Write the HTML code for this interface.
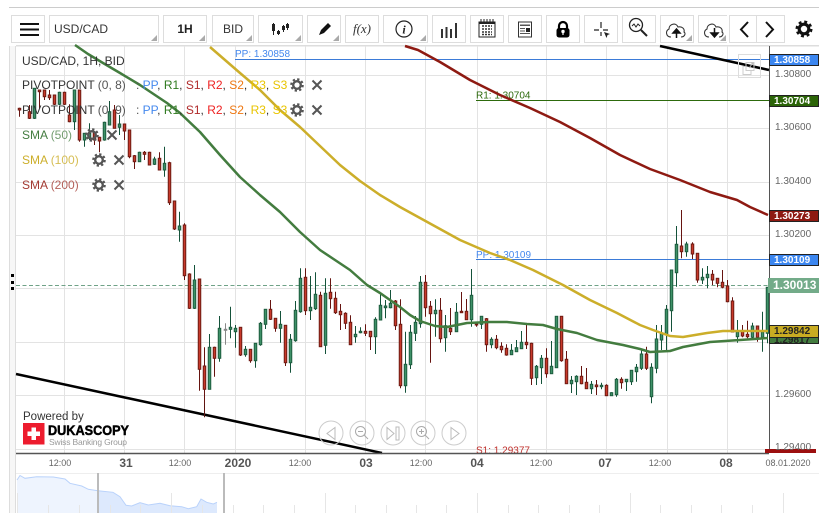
<!DOCTYPE html>
<html><head><meta charset="utf-8"><style>
html,body{margin:0;padding:0;background:#fff}
body{width:826px;height:523px;overflow:hidden;position:relative;font-family:"Liberation Sans",sans-serif}
.b{position:absolute;top:15px;height:26px;border:1px solid #ddd;background:#fff;box-sizing:content-box;font-size:12px;color:#222;line-height:26px;text-align:center}
.b i{position:absolute;right:1px;bottom:1px;width:0;height:0;border-left:6px solid transparent;border-bottom:6px solid #aaa}
.b svg,.a svg{position:absolute;left:0;top:0}
.l{position:absolute;left:769px;width:50px;height:12px;line-height:11px;font-size:10px;color:#fff;box-sizing:border-box;border:1px solid #222;padding-left:4px;font-weight:bold}
.t{position:absolute;font-size:9px;color:#666;white-space:nowrap;line-height:12px;transform:translateX(-50%);top:457px}
.m{font-size:12px;font-weight:bold;color:#555;top:455px;line-height:16px}
.y{position:absolute;left:775px;font-size:10px;color:#666;line-height:12px}
.g{position:absolute;left:22px;font-size:12px;line-height:14px;white-space:nowrap;color:#333}
.g b{font-weight:normal;color:#555;margin-left:3.5px}
</style></head><body>
<div style="position:absolute;left:9px;top:7px;width:810px;height:1px;background:#ccc"></div>
<div style="position:absolute;left:9px;top:46px;width:7px;height:467px;background:#f7f7f7;border-left:1px solid #ddd;box-sizing:border-box;border-right:1px solid #ddd"></div>
<div style="position:absolute;left:11px;top:274px;width:3px;height:3px;background:#000"></div>
<div style="position:absolute;left:11px;top:281px;width:3px;height:3px;background:#000"></div>
<div style="position:absolute;left:11px;top:287px;width:3px;height:3px;background:#000"></div>

<div class="b" style="left:11px;width:32px"><svg width="32" height="26"><path d="M8 8H27M8 13.500H27M8 19H27" stroke="#111" stroke-width="2"/></svg></div>
<div class="b" style="left:49px;text-align:left;padding-left:4px;width:104px;color:#333">USD/CAD<i></i></div>
<div class="b" style="left:163px;width:42px;font-weight:bold">1H<i></i></div>
<div class="b" style="left:212px;width:40px;color:#333">BID<i></i></div>
<div class="b" style="left:258px;width:43px"><svg width="43" height="26"><path d="M14.500 7v12M19.500 14v5M24.500 9v7M28.500 7v7" stroke="#222" stroke-width="1"/><path d="M13 8h3v7h-3zM18 15h3v3h-3zM23 10h3v4h-3zM27 8h3v4h-3z" fill="#222"/></svg><i></i></div>
<div class="b" style="left:307px;width:32px"><svg width="32" height="26"><path d="M11 19l2-5 7-7 3 3-7 7z" fill="#111"/></svg><i></i></div>
<div class="b" style="left:345px;width:32px;font-family:'Liberation Serif',serif;font-style:italic;font-size:13px;color:#333">f(x)</div>
<div class="b" style="left:383px;width:43px"><svg width="43" height="26"><circle cx="20" cy="13" r="8" fill="none" stroke="#222" stroke-width="1.200"/><text x="20" y="17.500" text-anchor="middle" font-family="Liberation Serif" font-style="italic" font-weight="bold" font-size="12" fill="#222">i</text></svg><i></i></div>
<div class="b" style="left:432px;width:32px"><svg width="32" height="26"><path d="M9 13V22M13.500 11V22M18 13V22M23 7V22" stroke="#333" stroke-width="2" fill="none"/></svg></div>
<div class="b" style="left:470px;width:32px"><svg width="32" height="26"><rect x="8" y="6" width="16" height="15" fill="none" stroke="#222"/><path d="M8 6h16v2H8z" fill="#222"/><path d="M10 3v4M13 3v4M16 3v4M19 3v4M22 3v4" stroke="#222"/><path d="M11 10h10M11 13h10M11 16h10M11 18.500h10" stroke="#333" stroke-width="1.500" stroke-dasharray="2 1"/></svg></div>
<div class="b" style="left:508px;width:32px"><svg width="32" height="26"><rect x="9.500" y="6" width="13" height="15" fill="#fff" stroke="#333"/><path d="M11 8.500h10v1.500H11zM11 12h5v1H11zM11 14.500h5v1H11zM11 17h10v1H11z" fill="#555"/><path d="M17 12h4v4h-4z" fill="#222"/></svg></div>
<div class="b" style="left:546px;width:32px"><svg width="32" height="26"><path d="M12 13V10a4 4 0 0 1 8 0v3" fill="none" stroke="#000" stroke-width="2.200"/><rect x="9.500" y="12" width="13" height="9.500" rx="2.500" fill="#000"/><circle cx="16" cy="15.500" r="1.700" fill="#fff"/><path d="M15.400 16h1.200v3h-1.200z" fill="#fff"/></svg></div>
<div class="b" style="left:584px;width:32px"><svg width="32" height="26"><path d="M16 6v6M16 16v4M9 14h5M18 14h5" stroke="#222" stroke-width="1.200"/><path d="M19 16l6 2-2.500 1-1 3z" fill="#222"/></svg></div>
<div class="b" style="left:622px;width:32px"><svg width="32" height="26"><circle cx="13" cy="9" r="6.500" fill="none" stroke="#222" stroke-width="1.300"/><path d="M18 14l6 6" stroke="#222" stroke-width="2"/><path d="M9 10l2-2 2 3 2-3 2 2" fill="none" stroke="#222"/></svg></div>
<div class="b" style="left:660px;width:32px"><svg width="32" height="26"><path d="M10 22c-5 0-6-6-2-8 0-5 7-7 9-2 4-1 7 2 6 5 2 1 1 5-3 5" fill="none" stroke="#333" stroke-width="1.100" transform="translate(0 -1)"/><path d="M15.500 22v-7M12 17l3.500-4 3.500 4z" fill="#111" stroke="#111" stroke-width="1.500"/></svg><i></i></div>
<div class="b" style="left:698px;width:28px;border-right:0"><svg width="32" height="26"><path d="M10 22c-5 0-6-6-2-8 0-5 7-7 9-2 4-1 7 2 6 5 2 1 1 5-3 5" fill="none" stroke="#333" stroke-width="1.100" transform="translate(0 -1)"/><path d="M15.500 12v6M12 17l3.500 4 3.500-4z" fill="#111" stroke="#111" stroke-width="1.500"/></svg><i></i></div>
<div class="b" style="left:729px;width:26px"><svg width="26" height="26"><path d="M18 6l-7 7.500 7 7.500" fill="none" stroke="#111" stroke-width="2"/></svg></div>
<div class="b" style="left:756px;width:27px"><svg width="27" height="26"><path d="M9 6l7 7.500-7 7.500" fill="none" stroke="#111" stroke-width="2"/></svg></div>
<svg style="position:absolute;left:795px;top:20px" width="18" height="18"><circle cx="9" cy="9" r="4.800" fill="none" stroke="#111" stroke-width="3.200"/><circle cx="9" cy="9" r="7" fill="none" stroke="#111" stroke-width="3" stroke-dasharray="2.800 2.700"/></svg>

<svg id="c" style="position:absolute;left:0;top:0" width="826" height="523">
<rect x="16" y="45" width="803" height="1.500" fill="#ddd"/>
<g stroke="#e3e3e3" stroke-width="1">
<path d="M64.500 46V453M124.500 46V453M184.500 46V453M235.500 46V453M305.500 46V453M365.500 46V453M425.500 46V453M477.500 46V453M546.500 46V453M606.500 46V453M667.500 46V453M727.500 46V453"/>
<path d="M16 75.500H769M16 128.500H769M16 182.500H769M16 235.500H769M16 288.500H769M16 342.500H769M16 395.500H769M16 449.500H769"/>
</g>
<path d="M235 59.500H769" stroke="#3b7bd8"/>
<path d="M476 100.500H769" stroke="#2d6a0c"/>
<path d="M476 259.500H769" stroke="#3b7bd8"/>
<text x="235" y="57" font-size="10" fill="#4488ee" font-family="Liberation Sans">PP: 1.30858</text>
<text x="476" y="98.500" font-size="10" fill="#2d6a0c" font-family="Liberation Sans">R1: 1.30704</text>
<text x="476" y="258" font-size="10" fill="#4488ee" font-family="Liberation Sans">PP: 1.30109</text>
<text x="476" y="453.500" font-size="10" fill="#c0302c" font-family="Liberation Sans">S1: 1.29377</text>
<path d="M16 285.500H769" stroke="#6fa287" stroke-dasharray="4 2.500"/>
<g id="k"></g>
<g fill="none" stroke-linejoin="round" stroke-width="2.500">
<polyline stroke="#8e1a12" points="405,46 418,50 440,62 470,80 500,95 530,108 560,122 590,138 620,155 650,169 680,180 710,192 737,200 750,207 768,215"/>
<polyline stroke="#ccae2a" points="210,47 240,73 260,90 280,110 300,127 320,146 340,165 360,181 380,195 400,207 420,218 440,229 460,240 490,253 510,260 533,270 563,285 590,300 617,313 640,325 653,330 670,336 683,337 707,333 723,331 768,331"/>
<polyline stroke="#437c3f" points="75,45 88,54 103,63 120,73 140,85 167,103 180,113 200,132 220,155 240,177 260,195 280,212 300,232 320,250 335,260 350,270 367,285 380,293 390,300 400,307 410,315 420,321 435,326 447,327 467,323 490,322 507,322 527,324 543,325 557,329 577,333 597,340 623,345 640,349 650,352 670,351 683,347 710,342 740,340 768,338"/>
</g>
<g stroke="#000" stroke-width="2.500" fill="none">
<path d="M16 374L382 453"/>
<path d="M660 46L769 70"/>
</g>
<path d="M204.500 403V417" stroke="#5a1410" stroke-width="1"/>
<path d="M16 453.500H769" stroke="#555" stroke-width="1.500"/>
<path d="M769.500 46V453" stroke="#555"/>
<path d="M16 473.500H819" stroke="#eee"/>
<rect x="765" y="449" width="51" height="4" fill="#9c0f0f"/>

<path d="M738.500 54.500h22v23h-22z" fill="none" stroke="#ddd"/>
<path d="M746 62.500h8v8h-8zM746 66.500h-3v8h8v-4" fill="none" stroke="#ccc"/>
<path d="M749 68l4-5M751 63h2v2" fill="none" stroke="#bbb"/>

<g fill="none" stroke="#ccc">
<circle cx="331" cy="433" r="12"/><circle cx="362" cy="433" r="12"/><circle cx="393" cy="433" r="12"/><circle cx="423" cy="433" r="12"/><circle cx="454" cy="433" r="12"/>
<path d="M335 427.500l-8 6 8 6z" stroke="#bbb"/>
<circle cx="360.500" cy="431.500" r="5" stroke="#aaa"/><path d="M358 431.500h5M364 435l4 4" stroke="#aaa"/>
<path d="M387 427.500l7 6-7 6z" stroke="#bbb"/><path d="M396 427h3v13h-3z" stroke="#bbb"/>
<circle cx="421.500" cy="431.500" r="5" stroke="#aaa"/><path d="M419 431.500h5M421.500 429v5M425 435l4 4" stroke="#aaa"/>
<path d="M451 427.500l8 6-8 6z" stroke="#bbb"/>
</g>

<rect x="23" y="423" width="21.500" height="21.500" fill="#ed1c2e"/>
<path d="M31.500 427.500h4.500v4h4v4.500h-4v4h-4.500v-4h-4v-4.500h4z" fill="#fff"/>
<text x="48" y="435" font-family="Liberation Sans" font-weight="bold" font-size="14" textLength="81" lengthAdjust="spacingAndGlyphs" stroke="#000" stroke-width=".5" fill="#000">DUKASCOPY</text>
<text x="49" y="445" font-family="Liberation Sans" font-size="8.500" fill="#999" textLength="78">Swiss Banking Group</text>
<text x="23" y="420" font-family="Liberation Sans" font-size="11.500" fill="#333">Powered by</text>

<path d="M17 513V480L20 475.500 25 478.300 36.700 476.700 53.300 477 65 479 70 483.300 81.700 486 88.300 489.300 98 490.700V513Z" fill="#eef4fe"/>
<path d="M98 513V490.700L113 492.300 120 496.700 126 505.300 131.700 506 140 502.700 148.300 505 160 503.300 170 505.700 181.700 506.700 188.300 508.700 196.700 506.700 201 499 206.700 502.300 213.300 504 217 502.300V513Z" fill="#dde9fd"/>
<path d="M17 480L20 475.500 25 478.300 36.700 476.700 53.300 477 65 479 70 483.300 81.700 486 88.300 489.300 98 490.700 113 492.300 120 496.700 126 505.300 131.700 506 140 502.700 148.300 505 160 503.300 170 505.700 181.700 506.700 188.300 508.700 196.700 506.700 201 499 206.700 502.300 213.300 504 217 502.300" fill="none" stroke="#b9d2fb"/>
<g stroke="#e6e6e6" stroke-width="1">
<path d="M17.500 493V513M171.500 493V513M325.500 493V513M477.500 493V513M630.500 493V513M783.500 493V513"/>
<path d="M48.500 505V513M79.500 505V513M110.500 505V513M140.500 505V513M202.500 505V513M233.500 505V513M263.500 505V513M294.500 505V513M355.500 505V513M386.500 505V513M416.500 505V513M446.500 505V513M508.500 505V513M538.500 505V513M569.500 505V513M599.500 505V513M660.500 505V513M691.500 505V513M721.500 505V513M752.500 505V513"/>
</g>
<path d="M98 473V513M224 473V513" stroke="#bbb" stroke-width="2"/>

<g fill="none" stroke="#555">
<circle cx="297" cy="85" r="3.800" stroke-width="2.400"/><circle cx="297" cy="85" r="5.800" stroke-width="2" stroke-dasharray="2.300 2.250"/><path d="M312.500 80.500l9 9M321.500 80.500l-9 9" stroke-width="2"/>
<circle cx="297" cy="110" r="3.800" stroke-width="2.400"/><circle cx="297" cy="110" r="5.800" stroke-width="2" stroke-dasharray="2.300 2.250"/><path d="M312.500 105.500l9 9M321.500 105.500l-9 9" stroke-width="2"/>
<circle cx="92" cy="135" r="3.800" stroke-width="2.400"/><circle cx="92" cy="135" r="5.800" stroke-width="2" stroke-dasharray="2.300 2.250"/><path d="M107.500 130.500l9 9M116.500 130.500l-9 9" stroke-width="2"/>
<circle cx="99" cy="160" r="3.800" stroke-width="2.400"/><circle cx="99" cy="160" r="5.800" stroke-width="2" stroke-dasharray="2.300 2.250"/><path d="M114.500 155.500l9 9M123.500 155.500l-9 9" stroke-width="2"/>
<circle cx="99" cy="185" r="3.800" stroke-width="2.400"/><circle cx="99" cy="185" r="5.800" stroke-width="2" stroke-dasharray="2.300 2.250"/><path d="M114.500 180.500l9 9M123.500 180.500l-9 9" stroke-width="2"/>
</g>
</svg>

<div class="g" style="top:54px">USD/CAD, 1H, BID</div>
<div class="g" style="top:78px">PIVOTPOINT <span style="color:#555">(0, 8)</span> &nbsp;<b>:</b> <span style="color:#4488ee">PP</span>, <span style="color:#2f7a1f">R1</span>, <span style="color:#b02a2a">S1</span>, <span style="color:#ee2222">R2</span>, <span style="color:#ee7711">S2</span>, <span style="color:#e8c400">R3</span>, <span style="color:#e8c400">S3</span></div>
<div class="g" style="top:103px">PIVOTPOINT <span style="color:#555">(0, 9)</span> &nbsp;<b>:</b> <span style="color:#4488ee">PP</span>, <span style="color:#2f7a1f">R1</span>, <span style="color:#b02a2a">S1</span>, <span style="color:#ee2222">R2</span>, <span style="color:#ee7711">S2</span>, <span style="color:#e8c400">R3</span>, <span style="color:#e8c400">S3</span></div>
<div class="g" style="top:128px;color:#437c3f">SMA <span style="opacity:.75">(50)</span></div>
<div class="g" style="top:153px;color:#ccae2a">SMA <span style="opacity:.8">(100)</span></div>
<div class="g" style="top:178px;color:#a33a32">SMA <span style="opacity:.8">(200)</span></div>

<div class="y" style="top:69px">1.30800</div>
<div class="y" style="top:122px">1.30600</div>
<div class="y" style="top:176px">1.30400</div>
<div class="y" style="top:229px">1.30200</div>
<div class="y" style="top:389px">1.29600</div>
<div class="y" style="top:442px">1.29400</div>

<div class="l" style="top:54px;background:#3b86f0">1.30858</div>
<div class="l" style="top:95px;background:#2b6407">1.30704</div>
<div class="l" style="top:210px;background:#8e1a12">1.30273</div>
<div class="l" style="top:254px;background:#3b86f0">1.30109</div>
<div class="l" style="top:337px;height:7px;background:#437c3f;color:#222;line-height:5px;overflow:hidden">1.29817</div>
<div class="l" style="top:325px;height:13px;background:#c9ac22;color:#222">1.29842</div>
<div style="position:absolute;left:768px;top:278px;width:51px;height:15px;line-height:15px;background:#73ab89;color:#fff;font-size:12px;font-weight:bold;padding-left:5px;box-sizing:border-box">1.30013</div>

<div class="t" style="left:60px">12:00</div>
<div class="t m" style="left:126px">31</div>
<div class="t" style="left:180px">12:00</div>
<div class="t m" style="left:238px">2020</div>
<div class="t" style="left:300px">12:00</div>
<div class="t m" style="left:366px">03</div>
<div class="t" style="left:421px">12:00</div>
<div class="t m" style="left:477px">04</div>
<div class="t" style="left:541px">12:00</div>
<div class="t m" style="left:605px">07</div>
<div class="t" style="left:660px">12:00</div>
<div class="t m" style="left:726px">08</div>
<div class="t" style="left:788px">08.01.2020</div>

<script>
var s='',sets=[
[0,45,[[58,'r',188,190,195,215],[88,'r',180,200,220,222],[103,'g',130,130,220,222],[118,'r',135,135,140,190],[133,'r',135,135,155,165],[148,'r',135,150,158,165],[163,'r',150,150,178,180],[178,'g',140,142,178,180],[193,'r',140,142,178,180],[208,'r',178,210,230,232],[223,'g',135,135,230,255],[238,'r',135,135,285,290],[253,'g',265,265,285,305],[268,'g',235,265,280,285],[283,'r',260,262,285,300],[298,'r',275,277,288,322],[313,'g',230,232,285,287],[328,'g',168,200,240,240],[343,'r',180,195,250,250],[358,'g',210,237,247,270],[373,'r',237,237,258,285],[388,'r',255,255,335,340],[403,'r',330,332,350,372],[418,'g',320,322,350,350],[433,'r',318,322,328,345],[448,'r',320,322,360,360],[463,'g',335,342,358,360],[478,'r',322,340,375,375],[493,'g',305,355,375,395],[508,'r',350,353,473,480],[523,'r',468,468,552,555],[538,'g',500,543,555,590]]],
[150,260,[[103,'r',-110,-105,47,60],[118,'r',40,42,145,147],[133,'g',15,60,145,147],[148,'r',57,57,328,392],[163,'r',262,318,388,472],[178,'g',222,262,388,388],[193,'r',260,262,295,350],[208,'g',168,205,295,305],[226,'n',190,208,209,254],[241,'g',140,202,208,235],[256,'g',195,205,215,263],[271,'r',202,202,285,288],[286,'g',258,268,284,290],[301,'r',268,268,302,308],[316,'g',250,250,302,323],[331,'g',186,190,254,257],[346,'g',148,148,193,207],[361,'r',120,148,178,180],[376,'r',175,175,205,215],[391,'g',153,193,205,248],[406,'r',195,196,308,318],[421,'g',222,238,308,338],[436,'g',123,151,242,245],[451,'g',25,55,155,158],[466,'r',25,52,152,165],[481,'g',48,142,152,180],[496,'g',37,103,146,150],[511,'r',95,106,260,260],[526,'g',55,100,256,282],[541,'r',55,97,116,146],[556,'r',95,115,158,162],[571,'r',132,154,164,210],[586,'r',157,160,190,207],[601,'r',166,187,254,255],[616,'g',198,223,230,248],[631,'g',202,214,218,220],[646,'r',193,214,220,228],[661,'r',213,214,230,270],[676,'g',172,178,230,282],[691,'g',98,136,180,180],[706,'g',120,138,143,175]]],
[390,260,[[1,'g',90,130,143,145],[16,'r',120,123,197,210],[31,'r',118,193,377,385],[46,'g',215,313,377,398],[61,'g',195,217,314,327],[76,'g',168,187,220,243],[91,'g',48,67,191,203],[106,'r',45,67,143,170],[121,'r',123,139,161,308],[136,'g',118,151,161,230],[151,'r',114,151,236,248],[166,'g',165,197,233,275],[181,'r',144,205,215,225],[199,'g',129,157,215,215],[214,'r',96,154,158,158],[229,'r',117,154,179,180],[244,'g',27,106,179,200],[259,'r',190,192,195,200],[274,'g',168,169,193,207],[289,'r',174,176,254,275],[304,'g',232,238,254,265],[319,'r',225,238,263,268],[334,'r',247,259,269,278],[349,'r',253,265,285,287],[364,'g',252,271,284,285],[379,'g',240,263,275,275],[394,'g',213,247,266,267],[409,'r',195,247,254,267],[424,'r',248,250,355,375],[439,'g',315,319,353,375],[454,'g',285,295,323,372],[469,'r',265,295,341,353],[484,'g',243,319,341,342],[499,'g',168,169,323,323],[514,'r',168,169,302,305],[529,'r',273,298,371,371],[544,'g',348,361,371,399],[559,'g',346,349,365,405],[574,'r',318,349,371,373],[589,'r',324,367,386,386],[604,'g',363,373,386,402],[619,'r',360,375,380,405],[634,'g',368,376,380,388],[649,'r',373,376,407,408],[664,'g',397,398,407,407],[679,'g',354,358,404,410],[694,'r',352,358,368,386],[709,'g',357,358,365,393],[724,'g',330,331,365,375],[739,'g',312,322,335,365]]],
[640,200,[[4,'g',450,462,505,510],[19,'r',440,462,505,510],[34,'g',490,502,590,610],[49,'g',375,417,505,520],[64,'g',375,400,420,450],[79,'g',315,328,405,450],[94,'g',210,210,332,395],[109,'g',78,133,218,260],[124,'r',30,138,155,175],[139,'g',125,132,155,170],[157,'r',127,132,162,177],[172,'r',160,160,240,248],[187,'g',205,232,240,252],[202,'g',198,223,233,265],[217,'r',210,223,240,255],[232,'r',235,235,250,262],[247,'r',210,247,262,265],[262,'r',240,258,305,307],[277,'r',292,303,396,396],[292,'g',360,396,410,428],[307,'r',375,395,408,412],[322,'r',362,403,410,415],[337,'g',368,378,412,415],[352,'r',378,378,412,425],[367,'g',335,396,412,455],[382,'g',262,262,400,430]]]
];
sets.forEach(function(S){S[2].forEach(function(d){
 var x=Math.floor(S[0]+d[0]/3)+.5,f=function(v){return (S[1]+v/3).toFixed(1)};
 var w=d[1]=='r'?'#661410':d[1]=='g'?'#14523a':'#888',b=d[1]=='r'?'#c8392b':d[1]=='g'?'#3f9168':'#999',o=d[1]=='r'?'#6e1a12':d[1]=='g'?'#1c5c3e':'#888';
 s+='<path d="M'+x+' '+f(d[2])+'V'+f(d[5])+'" stroke="'+w+'" stroke-width="1" fill="none"/>';
 var t=+f(d[3]),h=Math.max(1,+f(d[4])-t);
 s+='<rect x="'+(x-1.25)+'" y="'+t+'" width="2.5" height="'+h.toFixed(1)+'" fill="'+b+'" stroke="'+o+'" stroke-width="1"/>';
});});
document.getElementById('k').innerHTML=s;
</script>
</body></html>
